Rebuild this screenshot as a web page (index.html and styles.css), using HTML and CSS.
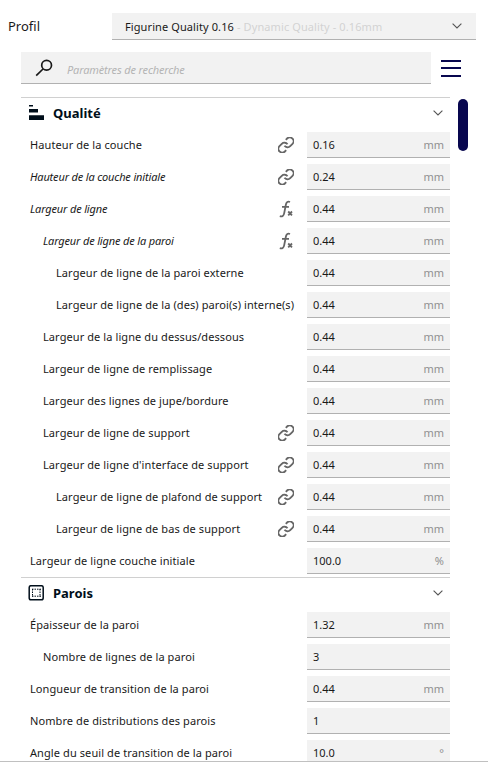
FILE: index.html
```
<!DOCTYPE html>
<html lang="fr">
<head>
  <meta charset="UTF-8" />
  <meta name="viewport" content="width=device-width, initial-scale=1.0"/>
  <title>Profil</title>
  <link rel="stylesheet" href="styles.css">
</head>
<body>

  <svg class="sprite" width="0" height="0">
    <symbol id="link" viewBox="1.5 1.5 21 21">
      <path d="M10 13a5 5 0 0 0 7.54.54l3-3a5 5 0 0 0-7.07-7.07l-1.72 1.71"/>
      <path d="M14 11a5 5 0 0 0-7.54-.54l-3 3a5 5 0 0 0 7.07 7.07l1.71-1.71"/>
    </symbol>
    <symbol id="formula" viewBox="0 0 16 18">
      <path d="M12 2 C9.8 1 8.4 2 7.9 4.5 L6.2 13.2 C5.7 15.9 4.2 16.9 1.8 16.2 M4 6.9 H11"/>
      <path class="times" d="M10.2 11.5 L14 15.3 M14 11.5 L10.2 15.3"/>
    </symbol>
    <symbol id="chevron" viewBox="0 0 10 6">
      <path d="M.6 .6 L5 5 L9.4 .6"/>
    </symbol>
  </svg>

  <div class="profile">
    <label>Profil</label>
    <div class="select">
      <span class="name">Figurine Quality 0.16</span>
      <span class="detail">- Dynamic Quality - 0.16mm</span>
      <svg class="chevron"><use href="#chevron"/></svg>
    </div>
  </div>

  <div class="search">
    <div class="search-box">
      <svg class="search-icon" viewBox="0 0 18 18"><circle cx="11.6" cy="6.3" r="4.9"/><path d="M8 10 L1.2 16.6"/></svg>
      <input type="text" placeholder="Paramètres de recherche" />
    </div>
    <div class="menu"><span></span><span></span><span></span></div>
  </div>

  <div class="settings">
    <div class="list">
      <div class="category">
        <svg class="category-icon" viewBox="0 0 16 16"><path d="M1 0h4v1.5H1zM1 4h9v3.4H1zM1 10.3h15V15H1z"/></svg>
        <h2>Qualité</h2>
        <svg class="chevron"><use href="#chevron"/></svg>
      </div>
      <div class="row"><label>Hauteur de la couche</label><svg class="icon"><use href="#link"/></svg><div class="field">0.16<span>mm</span></div></div>
      <div class="row"><label class="changed">Hauteur de la couche initiale</label><svg class="icon"><use href="#link"/></svg><div class="field">0.24<span>mm</span></div></div>
      <div class="row"><label class="changed">Largeur de ligne</label><svg class="icon formula"><use href="#formula"/></svg><div class="field">0.44<span>mm</span></div></div>
      <div class="row level-1"><label class="changed">Largeur de ligne de la paroi</label><svg class="icon formula"><use href="#formula"/></svg><div class="field">0.44<span>mm</span></div></div>
      <div class="row level-2"><label>Largeur de ligne de la paroi externe</label><div class="field">0.44<span>mm</span></div></div>
      <div class="row level-2"><label>Largeur de ligne de la (des) paroi(s) interne(s)</label><div class="field">0.44<span>mm</span></div></div>
      <div class="row level-1"><label>Largeur de la ligne du dessus/dessous</label><div class="field">0.44<span>mm</span></div></div>
      <div class="row level-1"><label>Largeur de ligne de remplissage</label><div class="field">0.44<span>mm</span></div></div>
      <div class="row level-1"><label>Largeur des lignes de jupe/bordure</label><div class="field">0.44<span>mm</span></div></div>
      <div class="row level-1"><label>Largeur de ligne de support</label><svg class="icon"><use href="#link"/></svg><div class="field">0.44<span>mm</span></div></div>
      <div class="row level-1"><label>Largeur de ligne d'interface de support</label><svg class="icon"><use href="#link"/></svg><div class="field">0.44<span>mm</span></div></div>
      <div class="row level-2"><label>Largeur de ligne de plafond de support</label><svg class="icon"><use href="#link"/></svg><div class="field">0.44<span>mm</span></div></div>
      <div class="row level-2"><label>Largeur de ligne de bas de support</label><svg class="icon"><use href="#link"/></svg><div class="field">0.44<span>mm</span></div></div>
      <div class="row"><label>Largeur de ligne couche initiale</label><div class="field">100.0<span>%</span></div></div>

      <div class="category">
        <svg class="category-icon walls" viewBox="0 0 16 16"><rect x="1.2" y=".7" width="14" height="14" rx="1.8"/><path d="M4 4.2H13M4 11.2H13M4.5 4V12M12 4V12"/></svg>
        <h2>Parois</h2>
        <svg class="chevron"><use href="#chevron"/></svg>
      </div>
      <div class="row"><label>Épaisseur de la paroi</label><div class="field">1.32<span>mm</span></div></div>
      <div class="row level-1"><label>Nombre de lignes de la paroi</label><div class="field">3</div></div>
      <div class="row"><label>Longueur de transition de la paroi</label><div class="field">0.44<span>mm</span></div></div>
      <div class="row"><label>Nombre de distributions des parois</label><div class="field">1</div></div>
      <div class="row"><label>Angle du seuil de transition de la paroi</label><div class="field">10.0<span>°</span></div></div>
    </div>
    <div class="scrollbar"></div>
  </div>

</body>
</html>
```
FILE: styles.css
```
* {
  box-sizing: border-box;
}

body {
  font-family: "Noto Sans", sans-serif;
  font-size: 11px;
  margin: 0;
  height: 770px;
  background: white;
  color: #191919;
  overflow: hidden;
}

svg {
  fill: none;
  flex-shrink: 0;
}

.sprite {
  display: block;
}

.profile {
  display: flex;
  align-items: center;
  height: 27px;
  margin: 13px 12px 12px 8px;
}

.profile label {
  width: 104px;
  padding-bottom: 1px;
  font-size: 13px;
}

.select {
  flex: 1;
  display: flex;
  align-items: center;
  gap: 3px;
  height: 27px;
  padding: 0 14px 0 13px;
  background: #f2f2f2;
  border-bottom: 1px solid #b1b1b1;
  letter-spacing: 0.1px;
}

.select .detail {
  color: #d2d2d2;
}

.chevron {
  width: 10px;
  height: 6px;
  margin-left: auto;
  stroke: #555;
  stroke-width: 1.1;
}

.search {
  display: flex;
  align-items: center;
  gap: 10px;
  margin-left: 21px;
}

.search-box {
  display: flex;
  align-items: center;
  width: 410px;
  height: 32px;
  padding-left: 14px;
  background: #f2f2f2;
  border-bottom: 1px solid #b1b1b1;
}

.search-icon {
  width: 18px;
  height: 18px;
  stroke: #191919;
  stroke-width: 1.7;
}

.search-box input {
  flex: 1;
  margin-left: 14px;
  padding: 4px 0 0;
  border: none;
  background: none;
  font: italic 11px "Noto Sans", sans-serif;
  letter-spacing: -0.15px;
}

.search-box input::placeholder {
  color: #b4b4b4;
}

.menu {
  display: flex;
  flex-direction: column;
  gap: 5.5px;
  width: 20px;
}

.menu span {
  height: 2px;
  background: #08074f;
}

.settings {
  display: flex;
  height: 665px;
  margin-top: 13px;
  padding-left: 21px;
  border-bottom: 1px solid #c0c0c0;
  overflow: hidden;
}

.list {
  width: 429px;
}

.category {
  display: flex;
  align-items: center;
  height: 32px;
  padding: 0 7px 2px;
  border-top: 1px solid #d0d0d0;
}

.category h2 {
  margin: 0 0 0 9px;
  font-size: 13px;
  font-weight: bold;
  color: #000e1a;
}

.category-icon {
  width: 16px;
  height: 16px;
  fill: #000e1a;
}

.category-icon.walls {
  fill: none;
  stroke: #000e1a;
  stroke-width: 1.5;
}

.walls path {
  stroke-width: 1;
  stroke-dasharray: 1.5 1;
}

.row {
  display: flex;
  align-items: center;
  height: 32px;
  padding-left: 9px;
}

.level-1 {
  padding-left: 22px;
}

.level-2 {
  padding-left: 35px;
}

.row label {
  flex: 1;
  padding-bottom: 1px;
  white-space: nowrap;
  letter-spacing: 0.09px;
}

.row .changed {
  font-style: italic;
  letter-spacing: -0.16px;
}

.icon {
  width: 16px;
  height: 16px;
  margin-right: 13px;
  stroke: #666;
  stroke-width: 2.4;
}

.formula {
  height: 18px;
  stroke-width: 1.8;
}

.field {
  display: flex;
  align-items: center;
  justify-content: space-between;
  width: 143px;
  height: 26px;
  padding: 0 6px;
  background: #f2f2f2;
  border-bottom: 1px solid #b1b1b1;
}

.field span {
  color: #909090;
}

.scrollbar {
  width: 10px;
  height: 52px;
  margin: 2px 0 0 8px;
  border-radius: 5px;
  background: #08074f;
}
```
